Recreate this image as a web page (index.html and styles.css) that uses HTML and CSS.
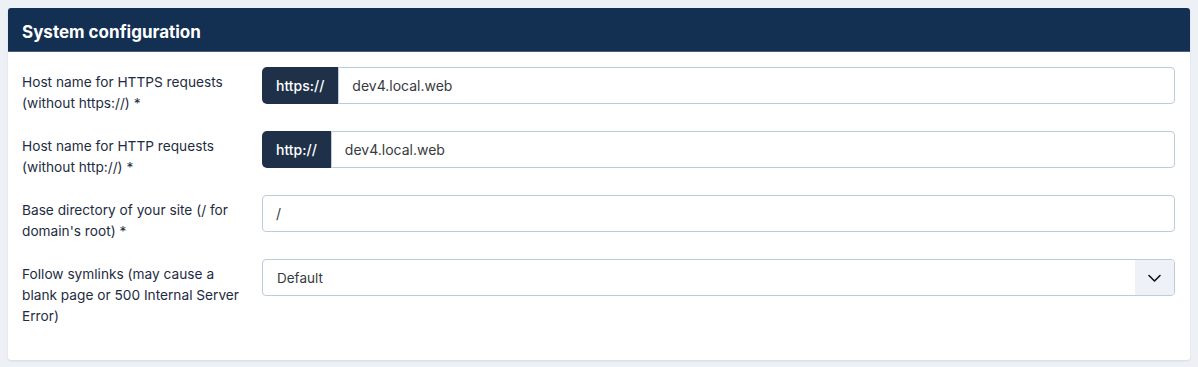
FILE: index.html
```html
<!DOCTYPE html>
<html lang="en">
<head>
  <meta charset="UTF-8">
  <meta name="viewport" content="width=device-width, initial-scale=1.0">
  <title>System configuration</title>
  <link rel="stylesheet" href="styles.css">
</head>
<body>
  <div class="card">
    <h2 class="card-header">System configuration</h2>
    <div class="card-body">

      <div class="form-row">
        <label for="https-host">Host name for HTTPS requests (without https://) *</label>
        <div class="input-group">
          <span class="prefix">https://</span>
          <input type="text" id="https-host" value="dev4.local.web">
        </div>
      </div>

      <div class="form-row">
        <label for="http-host">Host name for HTTP requests (without http://) *</label>
        <div class="input-group">
          <span class="prefix">http://</span>
          <input type="text" id="http-host" value="dev4.local.web">
        </div>
      </div>

      <div class="form-row">
        <label for="base-dir">Base directory of your site (/ for domain's root) *</label>
        <div class="input-group">
          <input type="text" id="base-dir" value="/">
        </div>
      </div>

      <div class="form-row">
        <label for="symlinks">Follow symlinks (may cause a blank page or 500 Internal Server Error)</label>
        <div class="select-wrap">
          <select id="symlinks">
            <option value="">Default</option>
            <option value="1">Yes</option>
            <option value="0">No</option>
          </select>
          <span class="select-arrow">
            <svg width="13" height="8" viewBox="0 0 13 8"><path d="M1 1.5l5.5 5.5 5.5-5.5" fill="none" stroke="#111" stroke-width="1.6" stroke-linecap="round" stroke-linejoin="round"/></svg>
          </span>
        </div>
      </div>

    </div>
  </div>
</body>
</html>
```

FILE: styles.css
```css
body {
  font-family: Inter, "Noto Sans", Arial, sans-serif;
  background-color: #edf1f6;
  color: #1e2c42;
  margin: 0;
  padding: 8px;
}

.card {
  background-color: #fff;
  border-radius: 3px;
  box-shadow: 0 1px 2px rgba(30, 50, 80, 0.12);
  overflow: hidden;
}

.card-header {
  margin: 0;
  height: 44px;
  box-sizing: border-box;
  padding: 14px 14px 0;
  background-color: #132f52;
  border-bottom: 1px solid #4a5d77;
  color: #fff;
  font-size: 17px;
  font-weight: 700;
  line-height: 20px;
}

.card-body {
  padding: 15px 15px 16px 14px;
}

.form-row {
  display: grid;
  grid-template-columns: 240px 1fr;
  align-items: start;
  margin-bottom: 17px;
}

.form-row label {
  padding-top: 5px;
  padding-right: 16px;
  font-size: 13.7px;
  line-height: 21px;
}

.input-group {
  display: flex;
  height: 37px;
}

.prefix {
  display: flex;
  align-items: center;
  padding: 0 14px;
  background-color: #1f3049;
  color: #fff;
  font-size: 14px;
  font-weight: 500;
  border-radius: 5px 0 0 5px;
}

input,
select {
  flex: 1;
  min-width: 0;
  box-sizing: border-box;
  height: 37px;
  border: 1px solid #bccbdd;
  border-radius: 4px;
  padding: 0 13px;
  font-family: inherit;
  font-size: 14px;
  color: #373b40;
  background-color: #fff;
}

.prefix + input {
  border-radius: 0 4px 4px 0;
  border-left: 1px solid #bccbdd;
}

.select-wrap {
  position: relative;
  display: flex;
  height: 37px;
}

select {
  appearance: none;
  -webkit-appearance: none;
  padding-left: 14px;
  font-size: 13.5px;
}

.select-arrow {
  position: absolute;
  top: 1px;
  right: 1px;
  bottom: 1px;
  width: 39px;
  display: flex;
  align-items: center;
  justify-content: center;
  background-color: #eef2f8;
  border-radius: 0 3px 3px 0;
  pointer-events: none;
}
```
